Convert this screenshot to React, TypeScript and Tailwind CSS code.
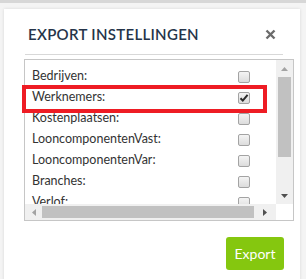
import React from 'react';

const items = [
  { label: 'Bedrijven:', checked: false },
  { label: 'Werknemers:', checked: true },
  { label: 'Kostenplaatsen:', checked: false },
  { label: 'LooncomponentenVast:', checked: false },
  { label: 'LooncomponentenVar:', checked: false },
  { label: 'Branches:', checked: false },
  { label: 'Verlof:', checked: false },
];

const Checkbox = ({ checked }: { checked: boolean }) => (
  <div className="w-[12px] h-[12px] rounded-[2px] border border-[#a3a3a3] bg-gradient-to-b from-[#f4f4f4] to-[#dcdcdc] flex items-center justify-center">
    {checked && (
      <svg width="10" height="10" viewBox="0 0 10 10">
        <path d="M1.5 5.2 L3.8 7.6 L8.6 1.8" fill="none" stroke="#2b2b2b" strokeWidth="2" />
      </svg>
    )}
  </div>
);

const Arrow = ({ dir, color }: { dir: 'up' | 'down' | 'left' | 'right'; color: string }) => {
  const pts = {
    up: '0,4 7,4 3.5,0',
    down: '0,0 7,0 3.5,4',
    left: '4,0 4,7 0,3.5',
    right: '0,0 0,7 4,3.5',
  }[dir];
  const vertical = dir === 'up' || dir === 'down';
  return (
    <svg width={vertical ? 7 : 4} height={vertical ? 4 : 7} viewBox={vertical ? '0 0 7 4' : '0 0 4 7'}>
      <polygon points={pts} fill={color} />
    </svg>
  );
};

export default function App() {
  return (
    <div className="relative w-[306px] h-[279px] overflow-hidden bg-[#f4f4f4] border-t-[3px] border-[#d7d7d7] font-['Lato','Open_Sans',sans-serif]">
      <div className="ml-[4px] mt-[6px] w-[296px] h-[280px] bg-white shadow-[0_0_3px_rgba(0,0,0,0.12)] pl-[20px] pt-[13px]">
        <div className="flex items-center justify-between w-[258px] pl-[4px] h-[24px]">
          <h2 className="text-[15px] tracking-[0.3px] font-semibold text-[#253449] uppercase">Export instellingen</h2>
          <svg width="11" height="11" viewBox="0 0 11 11" className="mr-[6px]">
            <path d="M1.5 1.5 L9.5 9.5 M9.5 1.5 L1.5 9.5" stroke="#6b6b6b" strokeWidth="2.4" />
          </svg>
        </div>
        <div className="ml-[1px] mt-[8px] w-[258px] h-px bg-[#d8d8d8]" />
        <div className="mt-[4px] w-[270px] h-[162px] border border-[#c6c6c6] flex flex-col">
          <div className="flex h-[144px]">
            <div className="w-[251px] overflow-hidden pt-[6px] pl-[7px] pr-[26px]">
              {items.map((it) => (
                <div key={it.label} className="h-[21px] flex items-center justify-between text-[12.5px] text-[#333]">
                  <span>{it.label}</span>
                  <Checkbox checked={it.checked} />
                </div>
              ))}
            </div>
            <div className="w-[17px] bg-[#f0f0f0] flex flex-col items-center">
              <div className="h-[17px] flex items-center justify-center">
                <Arrow dir="up" color="#a3a3a3" />
              </div>
              <div className="w-[13px] h-[80px] bg-[#c1c1c1]" />
              <div className="flex-1" />
              <div className="h-[17px] flex items-center justify-center">
                <Arrow dir="down" color="#505050" />
              </div>
            </div>
          </div>
          <div className="flex h-[16px]">
            <div className="w-[251px] bg-[#f0f0f0] flex items-center">
              <div className="w-[17px] flex justify-center">
                <Arrow dir="left" color="#a3a3a3" />
              </div>
              <div className="w-[212px] h-[12px] bg-[#c1c1c1]" />
              <div className="flex-1 flex justify-center">
                <Arrow dir="right" color="#505050" />
              </div>
            </div>
            <div className="w-[17px] bg-white" />
          </div>
        </div>
        <div className="w-[260px] flex justify-end mt-[16px]">
          <button className="w-[58px] h-[33px] rounded-[3px] bg-[#85c70f] text-white text-[14px]">Export</button>
        </div>
      </div>
      <div className="absolute left-[22px] top-[82px] w-[245px] h-[28px] border-[4px] border-[#ee1c24]" />
    </div>
  );
}
